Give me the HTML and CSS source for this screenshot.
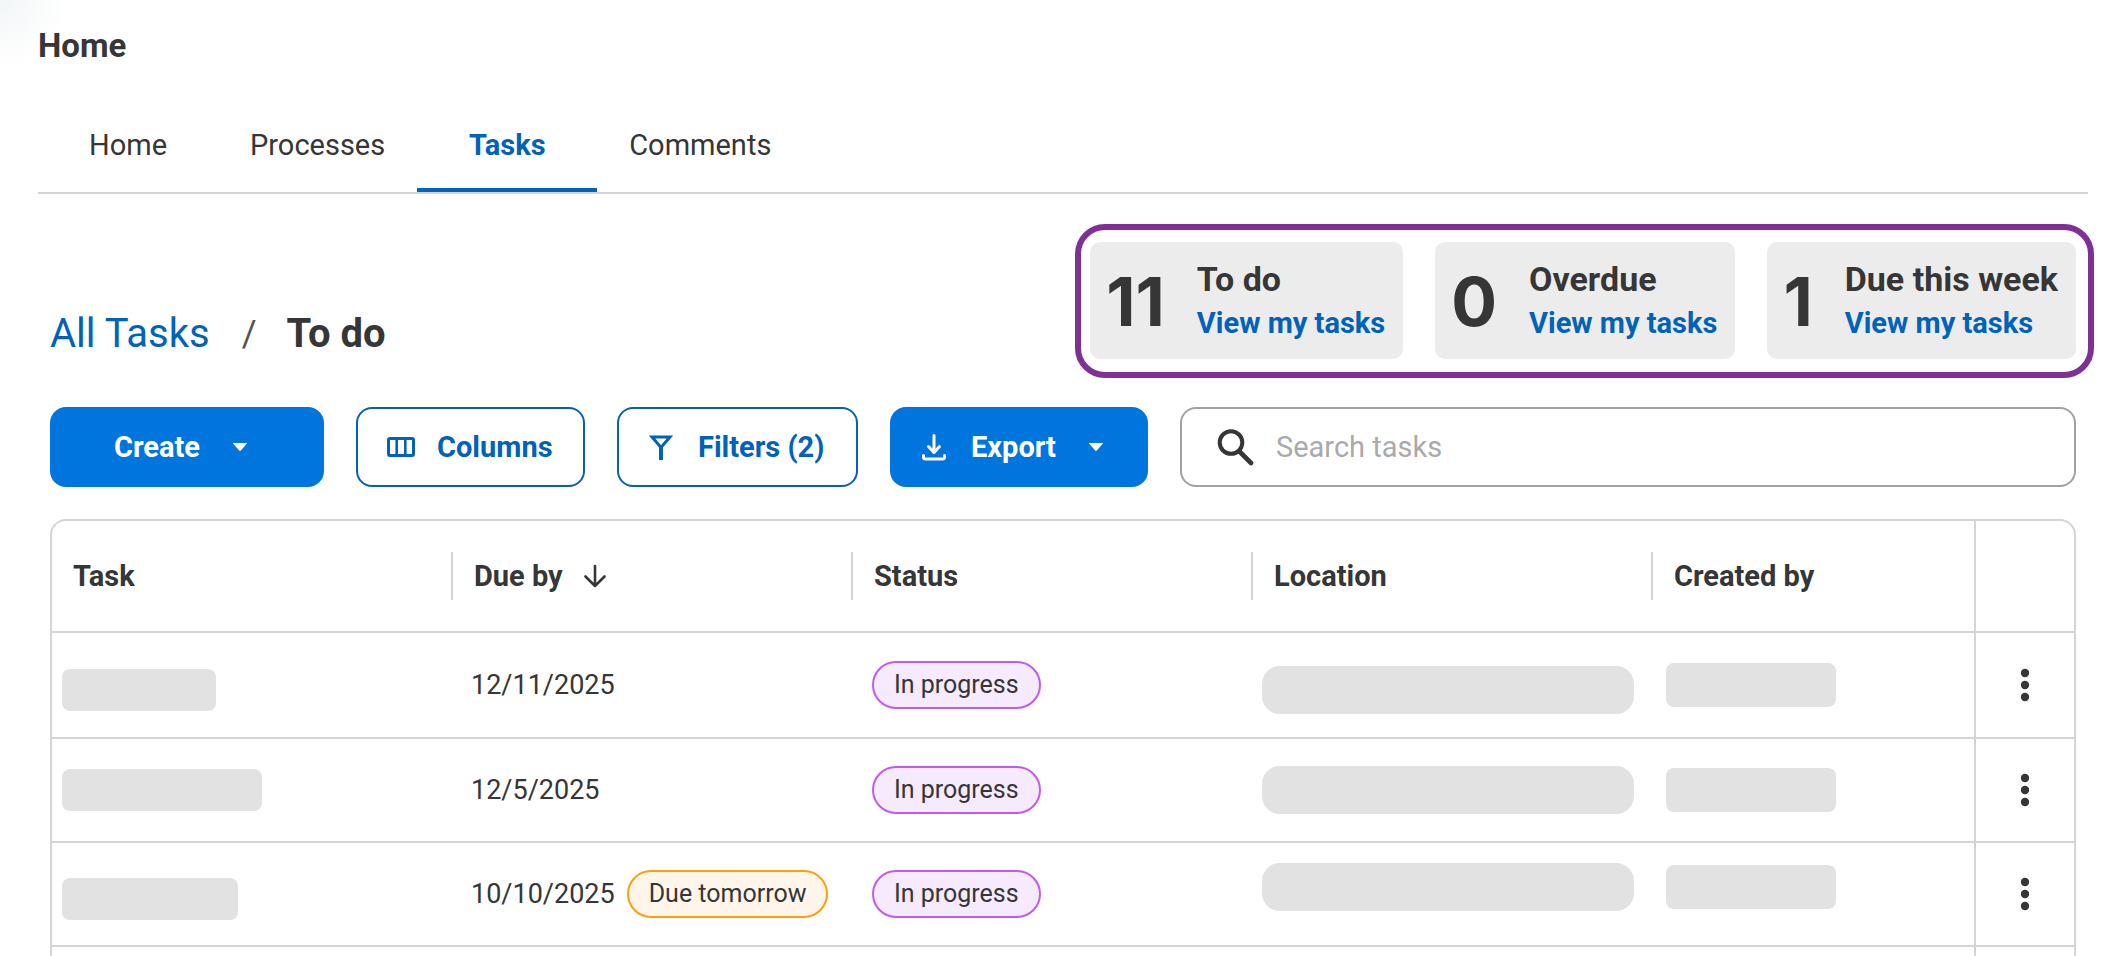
FILE: index.html
```html
<!DOCTYPE html>
<html lang="en">
<head>
<meta charset="utf-8">
<title>Home - Tasks</title>
<meta name="viewport" content="width=device-width, initial-scale=1">
<link rel="stylesheet" href="styles.css">
</head>
<body>
<header class="page-head">
  <h1 class="page-title">Home</h1>
  <nav class="tabs" aria-label="Sections">
    <a class="tab" href="#home">Home</a>
    <a class="tab" href="#processes">Processes</a>
    <a class="tab tab-active" href="#tasks" aria-current="page">Tasks</a>
    <a class="tab" href="#comments">Comments</a>
  </nav>
</header>
<main class="content">
  <div class="summary">
    <nav class="crumbs" aria-label="Breadcrumb">
      <a class="crumb-link" href="#all">All Tasks</a>
      <span class="crumb-sep">/</span>
      <h2 class="crumb-current">To do</h2>
    </nav>
    <section class="stats" aria-label="My tasks">
      <div class="stat">
        <span class="stat-number">11</span>
        <div class="stat-text"><span class="stat-label">To do</span><a class="stat-link" href="#todo">View my tasks</a></div>
      </div>
      <div class="stat">
        <span class="stat-number">0</span>
        <div class="stat-text"><span class="stat-label">Overdue</span><a class="stat-link" href="#overdue">View my tasks</a></div>
      </div>
      <div class="stat">
        <span class="stat-number">1</span>
        <div class="stat-text"><span class="stat-label">Due this week</span><a class="stat-link" href="#week">View my tasks</a></div>
      </div>
    </section>
  </div>

  <div class="toolbar">
    <button class="btn btn-primary btn-create" type="button">Create
      <svg class="caret" width="24" height="24" viewBox="0 0 24 24" aria-hidden="true"><path d="M5.500 8h13q1 0 .3.800l-6 6.700q-.8.800-1.600 0l-6-6.700q-.7-.8.300-.8z" fill="currentColor"/></svg>
    </button>
    <button class="btn btn-outline btn-columns" type="button">
      <svg width="28" height="28" viewBox="0 0 28 28" fill="none" stroke="currentColor" aria-hidden="true"><rect x="1.500" y="5.500" width="25" height="17" rx="1.500" stroke-width="3"/><path d="M9.700 5v18M18.300 5v18" stroke-width="2.600"/></svg>
      Columns
    </button>
    <button class="btn btn-outline btn-filters" type="button">
      <svg width="26" height="28" viewBox="0 0 26 28" fill="none" stroke="currentColor" aria-hidden="true"><path d="M4 4h18l-9 10.500z" stroke-width="3"/><path d="M13 13v14" stroke-width="4"/></svg>
      Filters (2)
    </button>
    <button class="btn btn-primary btn-export" type="button">
      <svg width="26" height="28" viewBox="0 0 26 28" fill="none" stroke="currentColor" stroke-width="3" stroke-linejoin="round" stroke-linecap="round" aria-hidden="true"><path d="M13 2.500v17M7.500 13.500l5.500 6 5.500-6M2.500 22.500v1.500q0 2 2 2h17q2 0 2-2v-1.500"/></svg>
      Export
      <svg class="caret" width="24" height="24" viewBox="0 0 24 24" aria-hidden="true"><path d="M5.500 8h13q1 0 .3.800l-6 6.700q-.8.800-1.600 0l-6-6.700q-.7-.8.300-.8z" fill="currentColor"/></svg>
    </button>
    <label class="search">
      <svg width="38" height="38" viewBox="0 0 38 38" fill="none" stroke="currentColor" stroke-linecap="round" aria-hidden="true"><circle cx="15" cy="14.500" r="11.300" stroke-width="4"/><path d="M23.500 23.500L35 35" stroke-width="4.600"/></svg>
      <input class="search-input" type="search" placeholder="Search tasks" aria-label="Search tasks">
    </label>
  </div>

  <div class="table-frame">
    <table class="tasks">
      <colgroup><col class="col-first"><col class="col-data"><col class="col-data"><col class="col-data"><col><col class="col-menu"></colgroup>
      <thead>
        <tr>
          <th scope="col"><div class="head">Task</div></th>
          <th scope="col" aria-sort="descending"><div class="head head-rule">Due by
            <svg width="24" height="24" viewBox="0 0 24 24" fill="none" stroke="currentColor" stroke-width="2.600" stroke-linecap="round" stroke-linejoin="round" aria-hidden="true"><path d="M12 2v20M2.500 12.500L12 22l9.500-9.500"/></svg></div></th>
          <th scope="col"><div class="head head-rule">Status</div></th>
          <th scope="col"><div class="head head-rule">Location</div></th>
          <th scope="col"><div class="head head-rule">Created by</div></th>
          <td class="menu-cell"></td>
        </tr>
      </thead>
      <tbody>
        <tr>
          <td><div class="mask mask-task mask-short mask-low"></div></td>
          <td class="due-cell"><div class="due">12/11/2025</div></td>
          <td class="status-cell"><span class="badge badge-progress">In progress</span></td>
          <td><div class="mask mask-location mask-low"></div></td>
          <td><div class="mask mask-person"></div></td>
          <td class="menu-cell"><button class="menu" type="button" aria-label="Task actions"><svg width="10" height="34" viewBox="0 0 10 34" fill="currentColor" aria-hidden="true"><circle cx="5" cy="5" r="4.200"/><circle cx="5" cy="17" r="4.200"/><circle cx="5" cy="29" r="4.200"/></svg></button></td>
        </tr>
        <tr>
          <td><div class="mask mask-task mask-long"></div></td>
          <td class="due-cell"><div class="due">12/5/2025</div></td>
          <td class="status-cell"><span class="badge badge-progress">In progress</span></td>
          <td><div class="mask mask-location"></div></td>
          <td><div class="mask mask-person"></div></td>
          <td class="menu-cell"><button class="menu" type="button" aria-label="Task actions"><svg width="10" height="34" viewBox="0 0 10 34" fill="currentColor" aria-hidden="true"><circle cx="5" cy="5" r="4.200"/><circle cx="5" cy="17" r="4.200"/><circle cx="5" cy="29" r="4.200"/></svg></button></td>
        </tr>
        <tr>
          <td><div class="mask mask-task mask-medium mask-low"></div></td>
          <td class="due-cell"><div class="due">10/10/2025 <span class="badge badge-due">Due tomorrow</span></div></td>
          <td class="status-cell"><span class="badge badge-progress">In progress</span></td>
          <td><div class="mask mask-location mask-high"></div></td>
          <td><div class="mask mask-person mask-high"></div></td>
          <td class="menu-cell"><button class="menu" type="button" aria-label="Task actions"><svg width="10" height="34" viewBox="0 0 10 34" fill="currentColor" aria-hidden="true"><circle cx="5" cy="5" r="4.200"/><circle cx="5" cy="17" r="4.200"/><circle cx="5" cy="29" r="4.200"/></svg></button></td>
        </tr>
        <tr class="row-next"><td colspan="5"></td><td class="menu-cell"></td></tr>
      </tbody>
    </table>
  </div>
</main>
</body>
</html>
```
FILE: styles.css
```css
* { box-sizing: border-box; }

body {
  margin: 0;
  background: radial-gradient(circle at 0 0, #f3f6f7 0, #ffffff 68px) #ffffff;
  color: #363636;
  font-family: Roboto, "Liberation Sans", sans-serif;
  font-size: 29px;
}

a { color: #0062b8; text-decoration: none; }
h1, h2 { margin: 0; }
svg { flex: none; }

.page-head { padding: 24px 30px 0 38px; }
.page-title { font-size: 33px; line-height: 44px; font-weight: 700; }
.tabs { display: flex; margin-top: 28px; border-bottom: 2px solid #d4d4d4; }
.tab {
  min-width: 180px;
  padding: 6px 32px 0;
  border-bottom: 4px solid transparent;
  color: #363636;
  line-height: 86px;
  text-align: center;
}
.tab-active { border-bottom-color: #0062b8; color: #0062b8; font-weight: 700; }

.content { padding: 30px 42px 0 50px; }

.summary { display: flex; justify-content: space-between; align-items: flex-end; margin-right: -18px; }
.crumbs { display: flex; align-items: center; margin-bottom: 21px; font-size: 40px; line-height: 46px; }
.crumb-sep { margin: 0 30px 0 32px; font-size: 36px; color: #555555; }
.crumb-current { font-size: 40px; font-weight: 700; }

.stats {
  display: flex;
  gap: 32px;
  padding: 12px 12px 13px 9px;
  border: 6px solid #7f3095;
  border-radius: 30px;
}
.stat {
  display: flex;
  align-items: center;
  gap: 32px;
  padding: 15px 18px 14px 16px;
  border-radius: 10px;
  background: #ececec;
}
.stat-number { font-family: Inter, sans-serif; font-size: 68px; line-height: 88px; font-weight: 700; }
.stat-text { display: flex; flex-direction: column; line-height: 44px; font-weight: 700; }
.stat-label { font-size: 34px; }

.toolbar { display: flex; gap: 32px; margin-top: 29px; }
.btn {
  display: flex;
  align-items: center;
  gap: 24px;
  height: 80px;
  padding: 0 29px;
  border: 2px solid #0062b8;
  border-radius: 16px;
  font: 700 29px/32px Roboto, "Liberation Sans", sans-serif;
  white-space: nowrap;
}
.btn-primary { border-color: #0075de; background: #0075de; color: #ffffff; }
.btn-outline { background: #ffffff; color: #0062b8; }
.btn-create { min-width: 274px; padding: 0 62px; }
.btn-columns { min-width: 229px; gap: 22px; }
.btn-filters { min-width: 241px; }
.btn-export { min-width: 258px; }
.caret { margin-left: 4px; }

.search {
  display: flex;
  flex: 1;
  align-items: center;
  gap: 22px;
  min-width: 0;
  height: 80px;
  padding: 0 34px;
  border: 2px solid #a2a2a2;
  border-radius: 16px;
  background: #ffffff;
}
.search-input {
  flex: 1;
  min-width: 0;
  padding: 0;
  border: 0;
  outline: 0;
  background: none;
  color: #363636;
  font: 400 29px/40px Roboto, "Liberation Sans", sans-serif;
}
.search-input::placeholder { color: #aaaaaa; opacity: 1; }

.table-frame {
  margin-top: 32px;
  border: 2px solid #d4d4d4;
  border-bottom: 0;
  border-radius: 16px 16px 0 0;
}
.tasks { width: 100%; table-layout: fixed; border-spacing: 0; }
.col-first { width: 399px; }
.col-data { width: 400px; }
.col-menu { width: 100px; }
.tasks th, .tasks td { padding: 0; border-bottom: 2px solid #d4d4d4; text-align: left; vertical-align: middle; }
.tasks thead tr { height: 112px; }
.tasks tbody tr { height: 104px; }
.tasks tbody tr:first-child { height: 106px; }
.tasks .row-next { height: 9px; }
.tasks .row-next td { border-bottom: 0; }
.head {
  display: flex;
  align-items: center;
  gap: 20px;
  height: 48px;
  padding-left: 21px;
  font-weight: 700;
}
.head-rule { border-left: 2px solid #d4d4d4; }
.tasks .due-cell { padding-left: 20px; font-size: 27px; }
.tasks .status-cell { padding-left: 21px; }
.tasks .menu-cell { border-left: 2px solid #d4d4d4; text-align: center; }
.due { display: flex; align-items: center; gap: 12px; white-space: nowrap; }

.badge {
  display: inline-block;
  padding: 0 20px;
  border: 2px solid;
  border-radius: 24px;
  font-size: 25px;
  line-height: 44px;
  vertical-align: middle;
}
.badge-progress { border-color: #bf5af5; background: #f6eafe; }
.badge-due { border-color: #ff9f0a; background: #fff5ea; }

.mask { background: #e2e2e2; }
.mask-task { height: 42px; margin-left: 10px; border-radius: 8px; }
.mask-short { width: 154px; }
.mask-medium { width: 176px; }
.mask-long { width: 200px; }
.mask-location { width: 372px; height: 48px; margin-left: 11px; border-radius: 18px; }
.mask-person { width: 170px; height: 44px; margin-left: 15px; border-radius: 8px; }
.mask-low { margin-top: 10px; }
.mask-high { margin-bottom: 14px; }

.menu {
  display: inline-flex;
  align-items: center;
  justify-content: center;
  width: 48px;
  height: 48px;
  padding: 0;
  border: 0;
  background: none;
  color: #363636;
  vertical-align: middle;
}
```
